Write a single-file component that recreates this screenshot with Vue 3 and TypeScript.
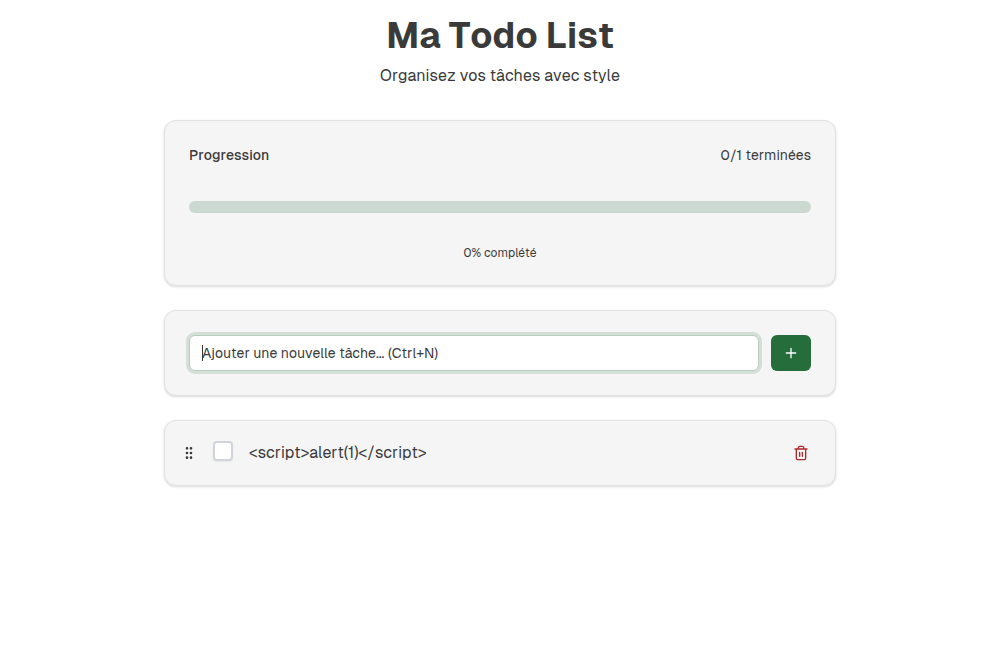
<script setup lang="ts">
import { computed, onBeforeUnmount, onMounted, ref } from 'vue'

interface Task {
  id: number
  label: string
  done: boolean
}

const tasks = ref<Task[]>([{ id: 1, label: '<script>alert(1)<\/script>', done: false }])
const draft = ref('')
const field = ref<HTMLInputElement | null>(null)
let nextId = 2

const doneCount = computed(() => tasks.value.filter((t) => t.done).length)
const percent = computed(() =>
  tasks.value.length ? Math.round((doneCount.value / tasks.value.length) * 100) : 0,
)

function addTask(): void {
  const label = draft.value.trim()
  if (!label) return
  tasks.value.push({ id: nextId++, label, done: false })
  draft.value = ''
}

function removeTask(id: number): void {
  tasks.value = tasks.value.filter((t) => t.id !== id)
}

function onKey(e: KeyboardEvent): void {
  if (e.ctrlKey && e.key === 'n') {
    e.preventDefault()
    field.value?.focus()
  }
}

onMounted(() => {
  field.value?.focus()
  window.addEventListener('keydown', onKey)
})
onBeforeUnmount(() => window.removeEventListener('keydown', onKey))
</script>

<template>
  <main class="page">
    <header class="intro">
      <h1>Ma Todo List</h1>
      <p>Organisez vos tâches avec style</p>
    </header>

    <section class="card progress-card">
      <div class="progress-head">
        <span id="progress-label" class="progress-title">Progression</span>
        <span>{{ doneCount }}/{{ tasks.length }} terminées</span>
      </div>
      <div
        class="track"
        role="progressbar"
        aria-labelledby="progress-label"
        :aria-valuenow="percent"
        aria-valuemin="0"
        aria-valuemax="100"
      >
        <div class="bar" :style="{ width: percent + '%' }"></div>
      </div>
      <p class="percent">{{ percent }}% complété</p>
    </section>

    <form class="card add-card" @submit.prevent="addTask">
      <div class="field-wrap">
        <input
          ref="field"
          v-model="draft"
          class="field"
          type="text"
          aria-label="Nouvelle tâche"
          placeholder="Ajouter une nouvelle tâche... (Ctrl+N)"
        />
        <span class="caret" aria-hidden="true"></span>
      </div>
      <button class="add" type="submit" aria-label="Ajouter">
        <svg width="16" height="16" viewBox="0 0 24 24" aria-hidden="true">
          <path d="M5 12h14M12 5v14" />
        </svg>
      </button>
    </form>

    <ul class="list">
      <li v-for="task in tasks" :key="task.id" class="card task">
        <svg class="grip" width="16" height="16" viewBox="0 0 24 24" aria-hidden="true">
          <circle cx="9" cy="12" r="1" />
          <circle cx="9" cy="5" r="1" />
          <circle cx="9" cy="19" r="1" />
          <circle cx="15" cy="12" r="1" />
          <circle cx="15" cy="5" r="1" />
          <circle cx="15" cy="19" r="1" />
        </svg>
        <span class="check">
          <input :id="'task-' + task.id" v-model="task.done" type="checkbox" />
        </span>
        <label :for="'task-' + task.id" :class="{ done: task.done }">{{ task.label }}</label>
        <button class="remove" type="button" aria-label="Supprimer" @click="removeTask(task.id)">
          <svg width="16" height="16" viewBox="0 0 24 24" aria-hidden="true">
            <path d="M3 6h18M19 6v14c0 1-1 2-2 2H7c-1 0-2-1-2-2V6M8 6V4c0-1 1-2 2-2h4c1 0 2 1 2 2v2M10 11v6M14 11v6" />
          </svg>
        </button>
      </li>
    </ul>
  </main>
</template>

<style>
body {
  background: #ffffff;
}
</style>

<style scoped>
.page {
  box-sizing: border-box;
  max-width: 704px;
  margin: 0 auto;
  padding: 16px;
  display: flex;
  flex-direction: column;
  gap: 24px;
  color: #3a3a3a;
  font-family: Geist, Inter, "Liberation Sans", sans-serif;
  font-size: 14px;
  line-height: 20px;
  font-kerning: none;
}

.page * {
  box-sizing: border-box;
}

.intro {
  margin-bottom: 8px;
  text-align: center;
}

h1 {
  margin: 0 0 8px;
  font-size: 36px;
  line-height: 40px;
  font-weight: 700;
}

p {
  margin: 0;
}

.intro p {
  font-size: 16px;
  line-height: 24px;
}

.card {
  background: #f5f5f5;
  border: 1px solid #e2e2e2;
  border-radius: 12px;
  box-shadow: 0 1px 3px rgba(0, 0, 0, 0.1), 0 1px 2px rgba(0, 0, 0, 0.06);
}

.progress-card {
  padding: 24px;
}

.progress-head {
  display: flex;
  justify-content: space-between;
}

.progress-title {
  font-weight: 500;
}

.track {
  height: 12px;
  margin: 36px 0 32px;
  overflow: hidden;
  border-radius: 6px;
  background: #cbd9d0;
}

.bar {
  height: 100%;
  background: #256d3a;
}

.percent {
  text-align: center;
  font-size: 12px;
  line-height: 16px;
}

.add-card {
  display: flex;
  gap: 12px;
  padding: 24px;
}

.field-wrap {
  position: relative;
  flex: 1;
  min-width: 0;
}

.field {
  display: block;
  width: 100%;
  height: 36px;
  padding: 4px 12px;
  border: 1px solid #e2e2e2;
  border-radius: 6px;
  background: #ffffff;
  color: inherit;
  font: inherit;
  font-kerning: inherit;
  outline: none;
}

.field:focus {
  border-color: #b9cebf;
  box-shadow: 0 0 0 3px #d4dfd8;
}

.field:placeholder-shown {
  caret-color: transparent;
}

.caret {
  display: none;
  position: absolute;
  top: 10px;
  left: 13px;
  width: 1px;
  height: 16px;
  background: #3a3a3a;
  pointer-events: none;
}

.field:focus:placeholder-shown + .caret {
  display: block;
}

.field::placeholder {
  color: #3a3a3a;
  opacity: 1;
}

button {
  display: flex;
  align-items: center;
  justify-content: center;
  flex: none;
  padding: 0;
  border: 0;
  border-radius: 6px;
  cursor: pointer;
}

svg {
  flex: none;
  fill: none;
  stroke: currentColor;
  stroke-width: 2;
  stroke-linecap: round;
  stroke-linejoin: round;
}

.add {
  width: 40px;
  height: 36px;
  background: #256d3a;
  color: #ffffff;
}

.list {
  display: flex;
  flex-direction: column;
  gap: 12px;
  margin: 0;
  padding: 0;
  list-style: none;
}

.task {
  display: flex;
  align-items: center;
  gap: 16px;
  padding: 16px;
}

.check {
  display: flex;
  padding-bottom: 4px;
}

.check input {
  appearance: none;
  width: 20px;
  height: 20px;
  margin: 0;
  border: 2px solid #d1d5db;
  border-radius: 4px;
  background: #ffffff;
  box-shadow: 0 1px 2px rgba(0, 0, 0, 0.05);
}

.check input:checked {
  border-color: #256d3a;
  background: #256d3a;
}

.task label {
  flex: 1;
  min-width: 0;
  overflow-wrap: anywhere;
  font-size: 16px;
  line-height: 24px;
}

.done {
  text-decoration: line-through;
}

.remove {
  width: 36px;
  height: 32px;
  background: transparent;
  color: #b3262b;
}
</style>
